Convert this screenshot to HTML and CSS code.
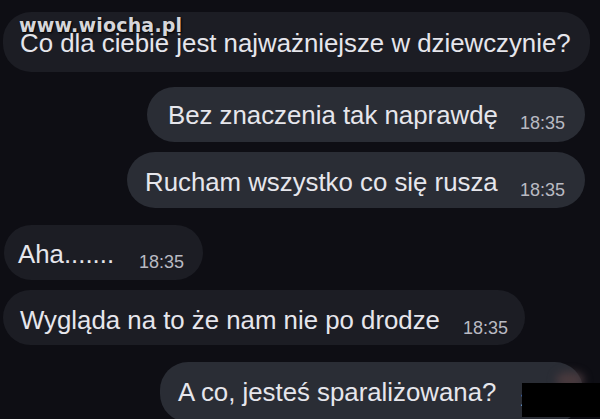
FILE: index.html
```html
<!DOCTYPE html>
<html lang="pl">
<head>
<meta charset="utf-8">
<link rel="stylesheet" href="styles.css">
</head>
<body>
<div class="chat">
  <div class="msg in m1"><span class="txt">Co dla ciebie jest najważniejsze w dziewczynie?</span></div>
  <div class="msg out m2"><span class="txt">Bez znaczenia tak naprawdę</span><span class="time">18:35</span></div>
  <div class="msg out m3"><span class="txt">Rucham wszystko co się rusza</span><span class="time">18:35</span></div>
  <div class="msg in m4"><span class="txt">Aha.......</span><span class="time">18:35</span></div>
  <div class="msg in m5"><span class="txt">Wygląda na to że nam nie po drodze</span><span class="time">18:35</span></div>
  <div class="msg out m6"><span class="txt">A co, jesteś sparaliżowana?</span><span class="time">18:35</span></div>
</div>
<div class="watermark">www.wiocha.pl</div>
<div class="blot"></div>
<div class="censor"></div>
</body>
</html>
```
FILE: styles.css
```css
html, body {
  margin: 0;
  padding: 0;
  width: 600px;
  height: 419px;
  overflow: hidden;
  background: #0e0e14;
  font-family: "Liberation Sans", Arial, sans-serif;
}
.chat {
  display: flex;
  flex-direction: column;
  padding-top: 12px;
}
.msg {
  display: flex;
  align-items: flex-start;
  box-sizing: border-box;
  border-radius: 28px;
  color: #e6e6ec;
  font-size: 25.8px;
  line-height: 30px;
  white-space: nowrap;
  flex-shrink: 0;
}
.in {
  align-self: flex-start;
  margin-left: 3px;
  background: #1c1d24;
}
.out {
  align-self: flex-end;
  margin-right: 15px;
  background: #2a2d35;
}
.time {
  font-size: 18px;
  line-height: 20px;
  color: #b9bac2;
  margin-left: auto;
  margin-top: 13px;
  padding-left: 14px;
}
.m1 { width: 587px; height: 60px; padding: 16px 0 0 17px; }
.m2 { margin-top: 15px; width: 438px; height: 55px; padding: 13px 20px 0 21px; }
.m3 { margin-top: 10px; width: 458px; height: 56px; padding: 15px 20px 0 18px; }
.m4 { margin-top: 17px; margin-left: 4px; width: 199px; height: 55px; padding: 14px 19px 0 14px; }
.m5 { margin-top: 10px; width: 522px; height: 55px; padding: 15px 17px 0 17px; }
.m6 { margin-top: 17px; margin-right: 17px; width: 423px; height: 60px; padding: 15px 18px 0 18px; }
.watermark {
  position: absolute;
  left: 19px;
  top: 14px;
  font-family: "DejaVu Sans", sans-serif;
  font-weight: bold;
  font-size: 19px;
  letter-spacing: 0.2px;
  color: #d6d6da;
  text-shadow: 1px 1px 2px #000;
}
.blot {
  position: absolute;
  left: 556px;
  top: 372px;
  width: 28px;
  height: 16px;
  border-radius: 50%;
  background: #4a3a3e;
  filter: blur(4px);
}
.censor {
  position: absolute;
  left: 522px;
  top: 383px;
  width: 78px;
  height: 34px;
  background: #000;
}
```
